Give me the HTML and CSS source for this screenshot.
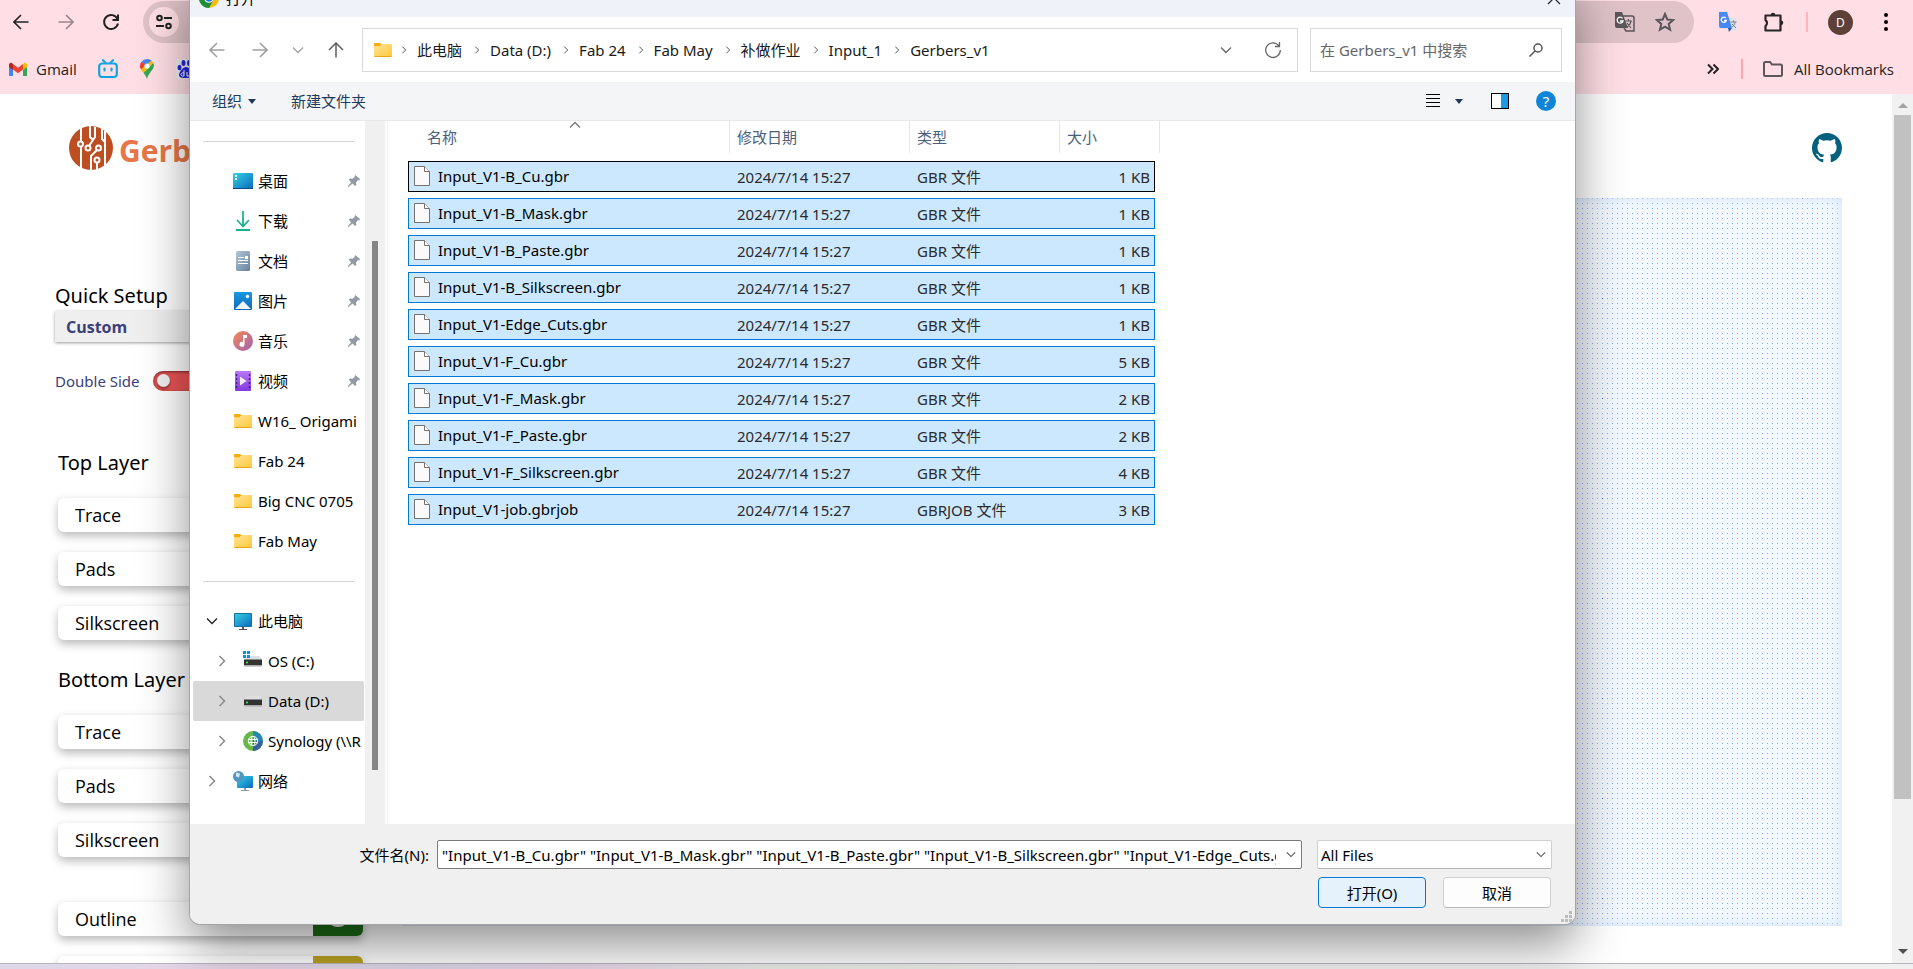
FILE: index.html
```html
<!DOCTYPE html>
<html lang="zh-CN">
<head>
<meta charset="utf-8">
<title>Gerber2PNG</title>
<link rel="stylesheet" href="styles.css">
</head>
<body>
<svg class="defs" aria-hidden="true">
  <defs>
    <linearGradient id="gy" x1="0" y1="0" x2="1" y2="1"><stop offset="0" stop-color="#ffe59a"/><stop offset="1" stop-color="#ffc836"/></linearGradient>
    <linearGradient id="gb" x1="0" y1="0" x2="1" y2="1"><stop offset="0" stop-color="#35d3e4"/><stop offset="1" stop-color="#0a69bd"/></linearGradient>
    <linearGradient id="gp" x1="0" y1="0" x2="0" y2="1"><stop offset="0" stop-color="#1c98e0"/><stop offset="1" stop-color="#0a68bc"/></linearGradient>
    <linearGradient id="gm" x1="0" y1="0" x2="1" y2="1"><stop offset="0" stop-color="#f58a52"/><stop offset="1" stop-color="#a061b5"/></linearGradient>
    <linearGradient id="gv" x1="0" y1="0" x2="0" y2="1"><stop offset="0" stop-color="#b878f5"/><stop offset="1" stop-color="#8438df"/></linearGradient>
    <linearGradient id="gd" x1="0" y1="0" x2="1" y2="1"><stop offset="0" stop-color="#b2c6da"/><stop offset="1" stop-color="#66819d"/></linearGradient>
    <symbol id="folder" viewBox="0 0 20 20"><path d="M1 4a1 1 0 0 1 1-1h5l2 2h-2L6 7H1z" fill="#f8ab14"/><path d="M1 6h6l2-2h9a1 1 0 0 1 1 1v11a1 1 0 0 1-1 1H2a1 1 0 0 1-1-1z" fill="url(#gy)"/><path d="M1 3.500h6L8.500 4.500 6.500 6.200H1z" fill="#f8ab14"/><path d="M1.500 16.500h17" stroke="#e9a51e"/></symbol>
    <symbol id="pin" viewBox="0 0 14 14"><path d="M8 1l5 4-1 1.500-1.200-.2-1.800 2.200.3 2.500-1.300 1-2.500-2.500L1.500 13l-.8-.6 3.300-4L1.800 5.600 3 4.400l2.500.3 2-1.700z" fill="#929ba3"/></symbol>
    <symbol id="file" viewBox="0 0 16 20"><path d="M.5.5h10l5 5v14H.5z" fill="#fafafa" stroke="#76716d"/><path d="M10.500.5v5h5" fill="#fff" stroke="#76716d"/></symbol>
    <symbol id="right" viewBox="0 0 8 12"><path d="M1.500 1l5 5-5 5" fill="none" stroke="currentColor" stroke-width="1.500"/></symbol>
    <symbol id="down" viewBox="0 0 12 8"><path d="M1 1.500l5 5 5-5" fill="none" stroke="currentColor" stroke-width="1.300"/></symbol>
    <symbol id="arrow" viewBox="0 0 16 16"><path d="M15.500 8H1M8 1L1 8l7 7" fill="none" stroke="currentColor" stroke-width="1.600"/></symbol>
    <symbol id="disk" viewBox="0 0 20 20"><path d="M4 7h12l3 4H1z" fill="#dcdfe3"/><path d="M1 10.500h18v5.500H1z" fill="#333"/><path d="M1 16h18v1.500H1z" fill="#aaa"/><circle cx="4" cy="13.500" r="1" fill="#4f4"/></symbol>
    <symbol id="monitor" viewBox="0 0 20 20"><path d="M1.500 2.500h17v13h-17z" fill="url(#gb)" stroke="#176f9f"/><path d="M9 16h2v2h3v1H6v-1h3z" fill="#555"/></symbol>
  </defs>
</svg>

<div class="screen">
  <header class="browser">
    <div class="bar">
      <div class="nav-icons">
        <button class="ib" aria-label="Back"><svg width="16" height="16"><use href="#arrow"/></svg></button>
        <button class="ib dim flip" aria-label="Forward"><svg width="16" height="16"><use href="#arrow"/></svg></button>
        <button class="ib" aria-label="Reload"><svg width="18" height="18" viewBox="0 0 18 18"><path d="M15.500 6A7 7 0 1 0 16 10.500M16 1.500V7h-5.500" fill="none" stroke="currentColor" stroke-width="2"/></svg></button>
      </div>
      <div class="omnibox">
        <button class="site" aria-label="Site information"><svg width="16" height="16" viewBox="0 0 16 16" fill="none" stroke="#222" stroke-width="2"><circle cx="3.500" cy="4" r="2.300"/><path d="M8 4h8M0 12h8"/><circle cx="12.500" cy="12" r="2.300"/></svg></button>
        <span class="grow"></span>
        <svg width="22" height="22" viewBox="0 0 22 22"><path d="M2 1h7l6 16H4a2 2 0 0 1-2-2z" fill="#5b5659"/><path d="M10 5h9a2 2 0 0 1 2 2v13h-8l-2-3" fill="none" stroke="#5b5659" stroke-width="1.500"/><path d="M9.500 7.300A3 3 0 1 0 10 10H7" fill="none" stroke="#fff" stroke-width="1.300"/><path d="M12 10h7M15.500 8v2M18 10c-.5 3-2 5-4 6M14 12l4 5" fill="none" stroke="#5b5659" stroke-width="1.200"/></svg>
        <svg width="20" height="20" viewBox="0 0 20 20"><path d="M10 2l2.300 5.500 5.900.5-4.500 3.900 1.400 5.800L10 14.600l-5.100 3.100 1.400-5.800L1.800 8l5.900-.5z" fill="none" stroke="#5b5659" stroke-width="2"/></svg>
      </div>
      <div class="ext">
        <svg width="20" height="20" viewBox="0 0 20 20"><path d="M9 6h9.500v13H12z" fill="#dfe3e8"/><path d="M1 0h8l5 16H3a2 2 0 0 1-2-2z" fill="#4688f4"/><path d="M10 16h4l-3 4z" fill="#2456c4"/><path d="M7.800 6A2.600 2.600 0 1 0 8.300 8.500H6" fill="none" stroke="#fff" stroke-width="1.300"/><path d="M12.500 10h6M15.500 8.500V10M17 10c0 3-2 4-3 5M14 12l4 4" fill="none" stroke="#77838f"/></svg>
        <svg width="22" height="22" viewBox="0 0 22 22"><path d="M2.500 4.500h15v15h-15V15c2-1.500 2-4.500 0-6z" fill="none" stroke="#262626" stroke-width="2.200" stroke-linejoin="round"/><path d="M7.700 4a2.300 2.300 0 0 1 4.600 0zM18 9.500a2.300 2.300 0 0 1 0 4.600z" fill="#262626"/></svg>
        <i class="sep"></i>
        <span class="avatar">D</span>
        <svg width="6" height="20" viewBox="0 0 6 20"><circle cx="3" cy="3" r="2"/><circle cx="3" cy="10" r="2"/><circle cx="3" cy="17" r="2"/></svg>
      </div>
    </div>
    <div class="bar marks">
      <a class="mark gmail" href="#"><svg width="18" height="14" viewBox="0 0 18 14"><path d="M0 2v12h4V6z" fill="#4285f4"/><path d="M18 2v12h-4V6z" fill="#34a853"/><path d="M14 2l2-1.500L18 2v3l-4 3z" fill="#fbbc04"/><path d="M0 2L2 .5 4 2v6L0 5z" fill="#b3261e"/><path d="M4 2l5 3.700L14 2v5.500l-5 3.700-5-3.700z" fill="#ea4335"/></svg>Gmail</a>
      <a class="mark" href="#" aria-label="bilibili"><svg width="20" height="20" viewBox="0 0 20 20" fill="none" stroke="#12a5e3" stroke-width="2.200" stroke-linecap="round"><rect x="1.200" y="4.500" width="17.600" height="13.500" rx="3"/><path d="M5 1.200l2.500 2.500M15 1.200l-2.500 2.500M6.500 9.500v2M13.500 9.500v2"/></svg></a>
      <a class="mark" href="#" aria-label="Maps"><svg width="16" height="20" viewBox="0 0 16 20"><path d="M8 0a7 7 0 0 0-5.500 2.700L8 7.500 12.500 1.500A7 7 0 0 0 8 0z" fill="#4285f4"/><path d="M2.500 2.700A7 7 0 0 0 2 10.500L8 6.500z" fill="#ea4335"/><path d="M2 10.500l2.500 3.500L14 3.500A7 7 0 0 0 12.500 1.500z" fill="#fbbc04"/><path d="M4.500 14L14.300 3.800C17 10 10 12 8 20 7 17 6 16 4.500 14z" fill="#34a853"/><circle cx="8" cy="7" r="2.600" fill="#fff"/></svg></a>
      <a class="mark" href="#" aria-label="Baidu"><svg width="20" height="20" viewBox="0 0 20 20"><rect width="20" height="20" rx="3" fill="#f1f1f4"/><g fill="#2529d8"><ellipse cx="7.500" cy="4" rx="2" ry="3"/><ellipse cx="13" cy="4" rx="2" ry="3"/><ellipse cx="3.500" cy="8.500" rx="2" ry="2.700"/><ellipse cx="17" cy="8.500" rx="2" ry="2.700"/><path d="M10 8c3 0 7 5 7 8s-4 3-7 3-7 0-7-3 4-8 7-8z"/></g><path d="M8 11v6H6.500a1.500 1.500 0 0 1 0-3H8M11 13v4h3v-4" fill="none" stroke="#fff"/></svg></a>
      <span class="grow"></span>
      <svg width="12" height="12" viewBox="0 0 12 12" fill="none" stroke="#222" stroke-width="2"><path d="M1 1.500L5.500 6 1 10.500M6.500 1.500L11 6l-4.500 4.500"/></svg>
      <i class="sep strong"></i>
      <a class="mark all" href="#"><svg width="20" height="16" viewBox="0 0 20 16"><path d="M1 3a1.500 1.500 0 0 1 1.500-2H7l2 2.500h8.500A1.500 1.500 0 0 1 19 5v8.500a1.500 1.500 0 0 1-1.500 1.500h-15A1.500 1.500 0 0 1 1 13.500z" fill="none" stroke="#5b5659" stroke-width="2"/></svg>All Bookmarks</a>
    </div>
  </header>

  <div class="page">
    <aside class="panel">
      <div class="brand">
        <svg width="44" height="44" viewBox="0 0 44 44"><circle cx="22" cy="22" r="22" fill="#bd4e22"/><g fill="none" stroke="#fff" stroke-width="2"><path d="M12 2v13M12 21v21M21 0v11l3 3-4 6M26 1v10l-2 3M33 3v10l3 3V5M36 16v24M22 44V30l6-6M28 37v7"/><circle cx="11.500" cy="18" r="2.500"/><circle cx="19" cy="22" r="2.500"/><circle cx="29.500" cy="22" r="2.500"/><circle cx="28" cy="34" r="2.500"/></g></svg>
        <h1>Gerber2PNG</h1>
      </div>
      <label class="title quick" for="quick">Quick Setup</label>
      <select id="quick" class="setup"><option>Custom</option></select>
      <div class="side"><label for="double">Double Side</label><input id="double" class="toggle" type="checkbox"></div>
      <div class="layers">
        <h2 class="title">Top Layer</h2>
        <div class="stack"><button class="layer">Trace</button><button class="layer">Pads</button><button class="layer">Silkscreen</button></div>
        <h2 class="title second">Bottom Layer</h2>
        <div class="stack"><button class="layer">Trace</button><button class="layer">Pads</button><button class="layer">Silkscreen</button></div>
        <div class="stack last"><button class="layer">Outline<span class="tag green"><i></i></span></button><button class="layer end" aria-label="Drill"><span class="tag olive"><i></i></span></button></div>
      </div>
    </aside>
    <main class="work">
      <a class="github" href="#" aria-label="GitHub"><svg width="30" height="30" viewBox="0 0 16 16"><path fill="#04617e" d="M8 0C3.580 0 0 3.580 0 8c0 3.540 2.290 6.530 5.470 7.590.4.070.55-.17.55-.38 0-.19-.01-.82-.01-1.490-2.010.37-2.530-.49-2.690-.94-.09-.23-.48-.94-.82-1.130-.28-.15-.68-.52-.01-.53.63-.01 1.080.58 1.230.82.72 1.210 1.870.87 2.330.66.07-.52.28-.87.51-1.070-1.780-.2-3.640-.89-3.640-3.950 0-.87.31-1.590.82-2.150-.08-.2-.36-1.020.08-2.120 0 0 .67-.21 2.200.82.64-.18 1.320-.27 2-.27s1.360.09 2 .27c1.530-1.040 2.200-.82 2.200-.82.44 1.100.16 1.920.08 2.120.51.56.82 1.270.82 2.150 0 3.070-1.870 3.750-3.650 3.950.29.25.54.73.54 1.480 0 1.070-.01 1.930-.01 2.200 0 .21.150.46.55.38A8 8 0 0 0 16 8c0-4.420-3.580-8-8-8z"/></svg></a>
      <div class="canvas"></div>
    </main>
    <div class="scroll"><i class="tri up"></i><i class="thumb"></i><i class="tri dn"></i></div>
  </div>
  <footer class="taskbar"></footer>

  <section class="dialog" role="dialog" aria-label="打开">
    <div class="titlebar">
      <svg width="20" height="20" viewBox="0 0 20 20"><circle cx="10" cy="10" r="10" fill="#fbbc04"/><path d="M10 10L1.300 5A10 10 0 0 1 18.700 5z" fill="#ea4335"/><path d="M1.300 5A10 10 0 0 0 10 20l4.300-7.500L10 10 5.700 12.500z" fill="#1e8e3e"/><circle cx="10" cy="10" r="4.800" fill="#fff"/><circle cx="10" cy="10" r="3.700" fill="#1a73e8"/></svg>
      <span class="grow">打开</span>
      <button class="ib" aria-label="关闭"><svg width="14" height="14" viewBox="0 0 14 14" stroke="#222" stroke-width="1.200"><path d="M1 1l12 12M13 1L1 13"/></svg></button>
    </div>
    <div class="navrow">
      <div class="arrows">
        <button class="ib" aria-label="后退"><svg width="16" height="16"><use href="#arrow"/></svg></button>
        <button class="ib flip" aria-label="前进"><svg width="16" height="16"><use href="#arrow"/></svg></button>
        <button class="ib" aria-label="最近"><svg width="12" height="8"><use href="#down"/></svg></button>
        <button class="ib turn dark" aria-label="向上"><svg width="16" height="16"><use href="#arrow"/></svg></button>
      </div>
      <nav class="path">
        <svg width="20" height="20"><use href="#folder"/></svg>
        <svg class="gt root" width="6" height="8"><use href="#right"/></svg><a href="#">此电脑</a>
        <svg class="gt" width="6" height="8"><use href="#right"/></svg><a href="#">Data (D:)</a>
        <svg class="gt" width="6" height="8"><use href="#right"/></svg><a href="#">Fab 24</a>
        <svg class="gt" width="6" height="8"><use href="#right"/></svg><a href="#">Fab May</a>
        <svg class="gt" width="6" height="8"><use href="#right"/></svg><a href="#">补做作业</a>
        <svg class="gt" width="6" height="8"><use href="#right"/></svg><a href="#">Input_1</a>
        <svg class="gt" width="6" height="8"><use href="#right"/></svg><a href="#">Gerbers_v1</a>
        <span class="grow"></span>
        <button class="ib" aria-label="展开"><svg width="14" height="8" viewBox="0 0 12 8"><use href="#down"/></svg></button>
        <button class="ib reload" aria-label="刷新"><svg width="18" height="18" viewBox="0 0 18 18"><path d="M15 5A7.300 7.300 0 1 0 16.300 9M15.500 1v4.500H11" fill="none" stroke="currentColor" stroke-width="1.300"/></svg></button>
      </nav>
      <div class="search">
        <input type="text" placeholder="在 Gerbers_v1 中搜索" aria-label="搜索">
        <svg width="14" height="14" viewBox="0 0 14 14" fill="none" stroke="#555" stroke-width="1.500"><circle cx="9" cy="5" r="4"/><path d="M6 8l-5.500 5.500"/></svg>
      </div>
    </div>
    <div class="tools">
      <button class="tb">组织<i class="caret"></i></button>
      <button class="tb">新建文件夹</button>
      <span class="grow"></span>
      <button class="ib view" aria-label="视图"><svg width="14" height="14" viewBox="0 0 14 14" stroke="#000"><path d="M0 .5h14M0 4.500h14M0 8.500h14M0 12.500h14"/></svg><i class="caret"></i></button>
      <button class="ib" aria-label="预览窗格"><svg width="18" height="16" viewBox="0 0 18 16"><rect x=".5" y=".5" width="17" height="15" fill="#fff" stroke="#000"/><path d="M10 1h7v14h-7z" fill="#1c9be4"/></svg></button>
      <button class="help" aria-label="帮助">?</button>
    </div>
    <div class="body">
      <div class="tree">
        <hr>
        <ul>
          <li><svg width="20" height="20" viewBox="0 0 20 20"><rect y="2" width="20" height="16" rx="1" fill="url(#gb)"/><path d="M2 4h2v2H2zM2 7h2v2H2z" fill="#fff"/><path d="M0 17h20v1H0z" fill="#0b4a80"/></svg><span>桌面</span><svg class="pin" width="14" height="14"><use href="#pin"/></svg></li>
          <li><svg width="20" height="20" viewBox="0 0 20 20" fill="none" stroke="#1fb08f" stroke-width="1.800"><path d="M3 19h14M10 0v15M4 9l6 6.500L16 9"/></svg><span>下载</span><svg class="pin" width="14" height="14"><use href="#pin"/></svg></li>
          <li><svg width="20" height="20" viewBox="0 0 20 20"><rect x="3" width="14" height="20" rx="1.500" fill="url(#gd)"/><path d="M5 6.500h6M5 9.500h10M5 12.500h10" stroke="#fff"/><path d="M12 5h3v3h-3z" fill="#fff"/></svg><span>文档</span><svg class="pin" width="14" height="14"><use href="#pin"/></svg></li>
          <li><svg width="20" height="20" viewBox="0 0 20 20"><rect x="1" y="1" width="18" height="18" rx="1" fill="url(#gp)"/><path d="M2 18l8-8 8 8z" fill="#f1f6fb"/><circle cx="14.500" cy="5.500" r="1.700" fill="#fff"/></svg><span>图片</span><svg class="pin" width="14" height="14"><use href="#pin"/></svg></li>
          <li><svg width="20" height="20" viewBox="0 0 20 20"><circle cx="10" cy="10" r="10" fill="url(#gm)"/><path d="M10 4h4v3h-2.500v6A2.500 2.500 0 1 1 10 11z" fill="#fff"/></svg><span>音乐</span><svg class="pin" width="14" height="14"><use href="#pin"/></svg></li>
          <li><svg width="20" height="20" viewBox="0 0 20 20"><rect x="2" width="16" height="20" rx="1" fill="url(#gv)"/><path d="M3.500 3v14M16.500 3v14" stroke="#4b1d90" stroke-width="1.500" stroke-dasharray="2 2"/><path d="M7 5.500l6.500 4.500L7 14.500z" fill="#eee"/></svg><span>视频</span><svg class="pin" width="14" height="14"><use href="#pin"/></svg></li>
          <li><svg width="20" height="20"><use href="#folder"/></svg><span>W16_ Origami</span></li>
          <li><svg width="20" height="20"><use href="#folder"/></svg><span>Fab 24</span></li>
          <li><svg width="20" height="20"><use href="#folder"/></svg><span>Big CNC 0705</span></li>
          <li><svg width="20" height="20"><use href="#folder"/></svg><span>Fab May</span></li>
        </ul>
        <hr>
        <ul>
          <li class="node open"><svg class="tw" width="12" height="8"><use href="#down"/></svg><svg width="20" height="20"><use href="#monitor"/></svg><span>此电脑</span></li>
          <li class="node sub"><svg class="tw" width="12" height="12" viewBox="-2 0 12 12"><use href="#right" width="8" height="12"/></svg><svg width="20" height="20" viewBox="0 0 20 20"><use href="#disk" width="20" height="20" y="-2"/><path d="M0 0h3v3H0zM4 0h3v3H4zM0 4h3v3H0zM4 4h3v3H4z" fill="#0c8ee0"/></svg><span>OS (C:)</span></li>
          <li class="node sub picked"><svg class="tw" width="12" height="12" viewBox="-2 0 12 12"><use href="#right" width="8" height="12"/></svg><svg width="20" height="20" viewBox="0 0 20 20"><use href="#disk" width="20" height="20" y="-2"/></svg><span>Data (D:)</span></li>
          <li class="node sub"><svg class="tw" width="12" height="12" viewBox="-2 0 12 12"><use href="#right" width="8" height="12"/></svg><svg width="20" height="20" viewBox="0 0 20 20"><circle cx="10" cy="10" r="10" fill="#69b64c"/><path d="M10 0a10 10 0 0 1 10 10H10z" fill="#2389b3"/><path d="M20 10a10 10 0 0 1-10 10V10z" fill="#37619c"/><g fill="none" stroke="#fff"><circle cx="10" cy="10" r="4.700"/><ellipse cx="10" cy="10" rx="2" ry="4.700"/><path d="M5.500 8.500h9M5.500 11.500h9"/></g></svg><span>Synology (\\R</span></li>
          <li class="node"><svg class="tw" width="12" height="12" viewBox="-2 0 12 12"><use href="#right" width="8" height="12"/></svg><svg width="20" height="20" viewBox="0 0 20 20"><rect x="4" y="5" width="16" height="12" rx="1" fill="url(#gb)"/><path d="M11 17h2v2h3v1H8v-1h3z" fill="#8b98a5"/><circle cx="5.500" cy="5.500" r="5.500" fill="#4f97c0"/><path d="M3 1.500l4 1-1 4-3-1z" fill="#d4e8f2"/></svg><span>网络</span></li>
        </ul>
      </div>
      <div class="tscroll"><i></i></div>
      <div class="list">
        <table>
          <colgroup><col class="c1"><col class="c2"><col class="c3"><col class="c4"></colgroup>
          <thead><tr><th class="sorted">名称<svg width="12" height="8"><use href="#down"/></svg></th><th>修改日期</th><th>类型</th><th>大小</th></tr></thead>
          <tbody>
            <tr class="focus"><td><svg width="16" height="20"><use href="#file"/></svg>Input_V1-B_Cu.gbr</td><td>2024/7/14 15:27</td><td>GBR 文件</td><td>1 KB</td></tr>
            <tr><td><svg width="16" height="20"><use href="#file"/></svg>Input_V1-B_Mask.gbr</td><td>2024/7/14 15:27</td><td>GBR 文件</td><td>1 KB</td></tr>
            <tr><td><svg width="16" height="20"><use href="#file"/></svg>Input_V1-B_Paste.gbr</td><td>2024/7/14 15:27</td><td>GBR 文件</td><td>1 KB</td></tr>
            <tr><td><svg width="16" height="20"><use href="#file"/></svg>Input_V1-B_Silkscreen.gbr</td><td>2024/7/14 15:27</td><td>GBR 文件</td><td>1 KB</td></tr>
            <tr><td><svg width="16" height="20"><use href="#file"/></svg>Input_V1-Edge_Cuts.gbr</td><td>2024/7/14 15:27</td><td>GBR 文件</td><td>1 KB</td></tr>
            <tr><td><svg width="16" height="20"><use href="#file"/></svg>Input_V1-F_Cu.gbr</td><td>2024/7/14 15:27</td><td>GBR 文件</td><td>5 KB</td></tr>
            <tr><td><svg width="16" height="20"><use href="#file"/></svg>Input_V1-F_Mask.gbr</td><td>2024/7/14 15:27</td><td>GBR 文件</td><td>2 KB</td></tr>
            <tr><td><svg width="16" height="20"><use href="#file"/></svg>Input_V1-F_Paste.gbr</td><td>2024/7/14 15:27</td><td>GBR 文件</td><td>2 KB</td></tr>
            <tr><td><svg width="16" height="20"><use href="#file"/></svg>Input_V1-F_Silkscreen.gbr</td><td>2024/7/14 15:27</td><td>GBR 文件</td><td>4 KB</td></tr>
            <tr><td><svg width="16" height="20"><use href="#file"/></svg>Input_V1-job.gbrjob</td><td>2024/7/14 15:27</td><td>GBRJOB 文件</td><td>3 KB</td></tr>
          </tbody>
        </table>
      </div>
    </div>
    <div class="foot">
      <div class="frow">
        <label for="fname">文件名(N):</label>
        <div class="combo"><input id="fname" type="text" value='"Input_V1-B_Cu.gbr" "Input_V1-B_Mask.gbr" "Input_V1-B_Paste.gbr" "Input_V1-B_Silkscreen.gbr" "Input_V1-Edge_Cuts.gbr"'><svg width="10" height="7" viewBox="0 0 12 8"><use href="#down"/></svg></div>
        <div class="types"><select aria-label="文件类型"><option>All Files</option></select><svg width="10" height="7" viewBox="0 0 12 8"><use href="#down"/></svg></div>
      </div>
      <div class="actions"><button class="btn primary">打开(O)</button><button class="btn">取消</button></div>
      <svg class="grip" width="11" height="11" viewBox="0 0 11 11" fill="#bdbdbd"><path d="M8 0h3v3H8zM8 4h3v3H8zM4 4h3v3H4zM8 8h3v3H8zM4 8h3v3H4zM0 8h3v3H0z"/></svg>
    </div>
  </section>
</div>
</body>
</html>
```
FILE: styles.css
```css
* { box-sizing: border-box; }
body { margin: 0; color: #000; background: #fff; font: 15px/20px "Noto Sans", "Noto Sans CJK SC", sans-serif; }
button, input, select { font: inherit; color: inherit; margin: 0; }
a { color: inherit; text-decoration: none; }
svg { display: block; flex: none; }
ul { list-style: none; margin: 0; padding: 0; }
.defs { position: absolute; width: 0; height: 0; }
.grow { flex: 1; }
.ib { border: 0; background: none; padding: 0; display: flex; align-items: center; justify-content: center; }
.flip svg { transform: scaleX(-1); }
.turn svg { transform: rotate(90deg); }

.screen { position: relative; height: 100vh; overflow: hidden; display: flex; flex-direction: column; }

/* browser chrome */
.browser { background: #ffdfe5; height: 94px; color: #222; }
.bar { display: flex; align-items: center; height: 44px; }
.nav-icons { display: flex; width: 143px; gap: 20px; padding-left: 8px; }
.nav-icons .ib { width: 25px; height: 28px; }
.dim { color: #9b878b; }
.omnibox { flex: 1; height: 42px; border-radius: 21px; background: #dfc3c8; display: flex; align-items: center; gap: 20px; padding: 0 19px 0 6px; }
.site { width: 30px; height: 30px; border: 0; border-radius: 15px; background: #ffdfe5; padding: 0; display: flex; align-items: center; justify-content: center; }
.ext { display: flex; align-items: center; width: 219px; padding-left: 24px; }
.ext svg:nth-child(2) { margin-left: 25px; }
.sep { width: 2px; height: 20px; background: #ffb3bf; margin: 0 20px 0 21px; }
.sep.strong { background: #ffa5b3; margin: 0 20px 0 22px; }
.avatar { width: 25px; height: 25px; border-radius: 50%; background: #5d4037; color: #fff; font-size: 12px; line-height: 25px; text-align: center; margin-right: 30px; }
.marks { height: 50px; padding: 0 19px 0 9px; font-family: "Open Sans", sans-serif; }
.mark { display: flex; align-items: center; gap: 9px; margin-right: 21px; }
.mark.all { gap: 11px; margin: 0; }

/* page */
.page { flex: 1; min-height: 0; display: flex; }
.panel { width: 402px; padding: 32px 39px 0 55px; overflow: hidden; display: flex; flex-direction: column; }
.panel > * { flex: none; }
.brand { display: flex; align-items: center; gap: 6px; padding-left: 14px; }
.brand h1 { margin: 6px 0 0; font: 700 30px/38px "Open Sans", sans-serif; color: #e67648; }
.title { margin: 0; font-size: 20px; line-height: 26px; font-weight: 400; }
.quick { margin-top: 113px; }
.setup { appearance: none; border: 0; background: #efefef; width: 300px; height: 31px; margin-top: 2px; padding: 0 11px; font: 700 16px/22px "Open Sans", sans-serif; color: #3b4078; box-shadow: 0 1px 3px rgba(0,0,0,.4); }
.side { display: flex; align-items: center; gap: 13px; margin-top: 28px; color: #3b4078; height: 22px; }
.toggle { appearance: none; margin: 0; width: 46px; height: 20px; border-radius: 10px; background: #ea5455; padding: 3px 4px; box-shadow: inset 0 1px 3px rgba(0,0,0,.5); }
.toggle::before { content: ""; display: block; width: 13px; height: 13px; border-radius: 50%; background: #f1f1f1; box-shadow: 0 2px 3px rgba(0,0,0,.4); }
.layers { margin-top: 58px; padding-left: 3px; }
.stack { display: flex; flex-direction: column; gap: 20px; margin-top: 22px; }
.second { margin-top: 27px; }
.stack.last { margin-top: 45px; }
.layer { display: flex; flex: none; align-items: center; justify-content: space-between; height: 34px; border: 0; border-radius: 6px; overflow: hidden; padding: 0 0 0 17px; background: #fff; font: 18px/26px "Open Sans", sans-serif; box-shadow: 0 4px 10px rgba(0,0,0,.28); }
.layer.end { justify-content: flex-end; }
.tag { width: 50px; height: 34px; display: flex; align-items: center; justify-content: center; }
.tag i { width: 20px; height: 20px; border-radius: 50%; border: 2px solid #eee; }
.green { background: #1d6b17; }
.green i { height: 15px; }
.olive { background: #b9a023; }
.work { flex: 1; padding: 39px 50px 37px 0; display: flex; flex-direction: column; }
.github { align-self: flex-end; height: 30px; margin-bottom: 35px; }
.canvas { flex: 1; background:
  conic-gradient(from 270deg at 1px 1px, #2f62c4 90deg, transparent 0) 0 0 / 100px 100px,
  conic-gradient(from 270deg at 1px 1px, #88abe6 90deg, transparent 0) 0 0 / 5px 5px,
  #f3f8ff; box-shadow: inset 0 0 14px #cfe4fc; }
.scroll { width: 21px; background: #f1f1f1; display: flex; flex-direction: column; align-items: center; padding: 9px 0; }
.thumb { width: 17px; flex: 0 1 684px; background: #c1c1c1; margin-top: 7px; }
.tri { border: 5px solid transparent; }
.up { border-top: 0; border-bottom-color: #a3a3a3; }
.dn { border-bottom: 0; border-top-color: #505050; margin-top: auto; }
.taskbar { height: 6px; border-top: 1px solid #b9b5bf; background: linear-gradient(90deg, #dcd7e9, #e5d6e7 12%, #dcd7e9 22%, #e5d6e7 30%, #e8ebe8 40%, #f0f0f0 60%); }

/* file dialog */
.dialog { position: absolute; top: -22px; left: 190px; right: 338px; bottom: 45px; display: flex; flex-direction: column; background: #fff; border-radius: 10px; overflow: hidden; box-shadow: 0 0 0 1px #a5a5a5, 0 20px 50px rgba(0,0,0,.45); }
.titlebar { height: 39px; background: #f0f2f9; display: flex; align-items: center; gap: 7px; padding: 0 14px 0 9px; flex: none; }
.navrow { display: flex; align-items: center; gap: 12px; height: 65px; padding: 0 13px 0 15px; flex: none; }
.arrows { display: flex; width: 145px; gap: 12px; color: #a0a0a0; }
.arrows .ib { width: 25px; margin-right: 2px; }
.arrows .ib:nth-child(2) { margin-left: 5px; }
.arrows .dark { color: #666; }
.path { flex: 1; height: 44px; border: 1px solid #d9d9d9; display: flex; align-items: center; padding: 0 15px 0 10px; color: #1a1a1a; white-space: nowrap; }
.path .gt { margin: 0 10px 0 12px; color: #555; }
.path .root { margin-left: 8px; }
.path .ib { color: #666; }
.path .reload { margin-left: 31px; }
.search { width: 252px; height: 44px; border: 1px solid #d9d9d9; display: flex; align-items: center; padding: 0 18px 0 9px; }
.search input { flex: 1; min-width: 0; border: 0; outline: 0; padding: 0; background: none; }
.search input::placeholder { color: #666; opacity: 1; }
.tools { display: flex; align-items: center; flex: none; height: 39px; background: #f4f5f7; border-bottom: 1px solid #e5e7e9; padding: 0 19px 0 22px; color: #1e395b; }
.tb { border: 0; background: none; padding: 0; margin-right: 35px; display: flex; align-items: center; gap: 6px; }
.caret { border: 4px solid transparent; border-top: 5px solid #1e395b; border-bottom: 0; }
.view { gap: 15px; margin-right: 28px; }
.help { width: 20px; height: 20px; margin-left: 27px; padding: 0; border: 0; border-radius: 50%; background: #0f85d8; color: #fff; line-height: 20px; }
.body { flex: 1; min-height: 0; display: flex; }
.tree { width: 175px; overflow: hidden; }
.tree hr { height: 1px; border: 0; background: #d4d4d4; margin: 20px 11px 19px 13px; }
.tree li { height: 40px; margin: 0 1px 0 3px; padding-left: 40px; display: flex; align-items: center; gap: 5px; white-space: nowrap; border-radius: 2px; overflow: hidden; }
.tree .pin { margin: 0 3px 0 auto; }
.tree .node { padding-left: 13px; }
.tree .sub { padding-left: 23px; }
.tw { margin-right: 10px; color: #8a8a8a; }
.open .tw { color: #222; }
.tree .picked { background: #d9d9d9; }
.tscroll { width: 20px; background: #f0f0f0; display: flex; justify-content: center; padding: 120px 0 54px; margin-right: 2px; }
.tscroll i { width: 6px; background: #858585; }
.list { flex: 1; border-left: 1px solid #f3f3f3; padding-left: 20px; }
table { border-collapse: separate; border-spacing: 0; table-layout: fixed; width: 752px; }
.c1 { width: 322px; } .c2 { width: 180px; } .c3 { width: 150px; } .c4 { width: 100px; }
th { position: relative; height: 32px; border-right: 1px solid #e3e5e8; padding: 0 0 0 7px; text-align: left; font-weight: 400; color: #4c607a; }
th.sorted { padding-left: 19px; }
th svg { position: absolute; top: 0; left: 50%; transform: rotate(180deg); color: #777; }
thead::after { content: ""; display: block; height: 5px; }
tbody { color: #2b2b2b; }
td { height: 37px; padding: 3px 0 3px 7px; background: linear-gradient(#0078d7, #0078d7) 0 3px / 100% 1px no-repeat, linear-gradient(#0078d7, #0078d7) 0 33px / 100% 1px no-repeat, linear-gradient(#cce8ff, #cce8ff) 0 3px / 100% 31px no-repeat; }
td:first-child { color: #000; padding: 2px 0 0; }
td:first-child svg { display: inline-block; vertical-align: middle; margin: 0 8px 4px 6px; }
td:first-child, td:last-child { position: relative; }
td:first-child::before, td:last-child::after { content: ""; position: absolute; top: 3px; bottom: 3px; left: 0; width: 1px; background: #0078d7; }
td:last-child { text-align: right; padding-right: 10px; background-size: calc(100% - 5px) 1px, calc(100% - 5px) 1px, calc(100% - 5px) 31px; }
td:last-child::after { left: auto; right: 5px; }
.focus td { background-image: linear-gradient(#000, #000), linear-gradient(#000, #000), linear-gradient(#cce8ff, #cce8ff); }
.focus td:first-child::before, .focus td:last-child::after { background: #000; }

.foot { position: relative; flex: none; height: 100px; background: #f0f0f0; padding: 16px 23px 0 20px; }
.frow { display: flex; align-items: center; }
.frow label { width: 219px; text-align: right; margin-right: 8px; }
.combo, .types { display: flex; align-items: center; background: #fff; border: 1px solid #7a7a7a; border-radius: 2px; height: 29px; color: #555; }
.combo { flex: 1; padding: 0 5px 0 4px; margin-right: 15px; }
.combo input { flex: 1; min-width: 0; border: 0; outline: 0; padding: 0; margin-right: 10px; background: none; color: #000; }
.types { width: 235px; border-color: #d0d0d0; border-bottom-color: #b5b5b5; padding: 0 5px 0 3px; }
.types select { appearance: none; flex: 1; border: 0; padding: 0; background: none; color: #000; }
.actions { display: flex; justify-content: flex-end; gap: 17px; margin: 8px 1px 0 0; }
.btn { width: 108px; height: 31px; padding: 0; border: 1px solid #d0d0d0; border-bottom-color: #bbb; border-radius: 4px; background: #fdfdfd; color: #000; }
.btn.primary { border-color: #0078d4; background: #e5f1fb; }
.grip { position: absolute; right: 3px; bottom: 2px; }
```
